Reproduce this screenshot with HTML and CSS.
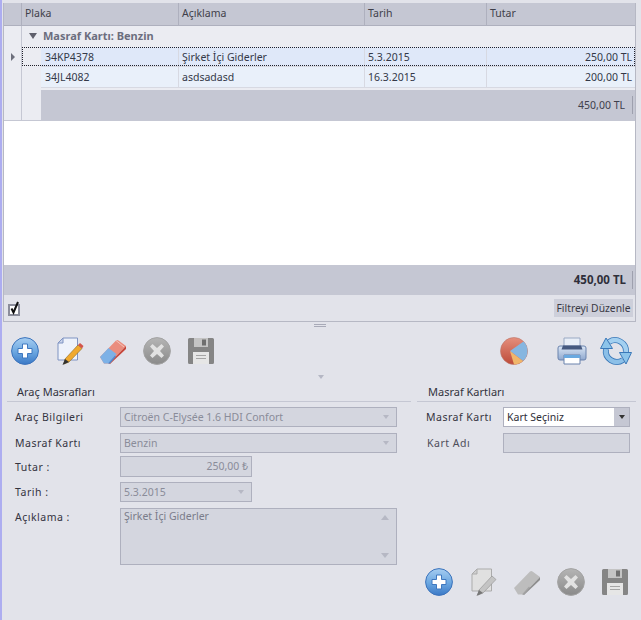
FILE: index.html
```html
<!DOCTYPE html>
<html lang="tr">
<head>
<meta charset="utf-8">
<title>Araç Masrafları</title>
<link rel="stylesheet" href="styles.css">
</head>
<body>
<svg class="defs" width="0" height="0" aria-hidden="true">
  <defs>
    <linearGradient id="gBlue" x1="0" y1="0" x2="0" y2="1"><stop offset="0" stop-color="#a6cdf1"/><stop offset=".55" stop-color="#6aa6e0"/><stop offset="1" stop-color="#3a78c6"/></linearGradient>
    <linearGradient id="gGray" x1="0" y1="0" x2="0" y2="1"><stop offset="0" stop-color="#b5b5b5"/><stop offset="1" stop-color="#8a8a8a"/></linearGradient>
    <linearGradient id="gPrint" x1="0" y1="0" x2="0" y2="1"><stop offset="0" stop-color="#dbe6f5"/><stop offset="1" stop-color="#8fa8cf"/></linearGradient>
    <linearGradient id="gPie" x1="0" y1="0" x2="0" y2="1"><stop offset="0" stop-color="#e58f7d"/><stop offset="1" stop-color="#bd4a38"/></linearGradient>
    <symbol id="plus" viewBox="0 0 28 28">
      <circle cx="14" cy="14" r="13.400" fill="url(#gBlue)" stroke="#3c73bb"/>
      <path d="M11.500 7h5v4.500H21v5h-4.500V21h-5v-4.500H7v-5h4.500z" fill="#fff" stroke="#3f78c0" stroke-width="1"/>
    </symbol>
    <symbol id="cross" viewBox="0 0 28 28">
      <circle cx="14" cy="14" r="13.400" fill="url(#gGray)" stroke="#a3a3a3"/>
      <path d="M9.500 7 14 11l4.500-4 2.500 2.500-4 4.500 4 4.500-2.500 2.500-4.500-4-4.500 4L7 18.500l4-4.500-4-4.500z" fill="#e2e2e2"/>
    </symbol>
    <symbol id="save" viewBox="0 0 28 28">
      <path d="M1 2.500A1.500 1.500 0 0 1 2.500 1h23A1.500 1.500 0 0 1 27 2.500v23a1.500 1.500 0 0 1-1.500 1.500h-23A1.500 1.500 0 0 1 1 25.500z" fill="#858585"/>
      <path d="M7 1h14v9H7z" fill="#c4c4c4"/><path d="M15 2.500h4v6h-4z" fill="#6f6f6f"/>
      <path d="M6 15h16v12H6z" fill="#e6e6e6"/><path d="M9 18.500h10M9 21.500h10" stroke="#a5a5a5"/>
    </symbol>
  </defs>
</svg>
<main class="app">
  <section class="panel">
    <div class="grid-head">
      <div class="cell-ind"></div>
      <div class="head-cell c1">Plaka</div>
      <div class="head-cell c2">Açıklama</div>
      <div class="head-cell c3">Tarih</div>
      <div class="head-cell c4">Tutar</div>
    </div>
    <div class="grid-body">
      <div class="ind-col"><span class="row-arrow"></span></div>
      <div class="rows">
        <div class="group-row"><span class="group-arrow"></span><b>Masraf Kartı: Benzin</b></div>
        <div class="indented">
          <div class="row row-focus">
            <div class="cell w1">34KP4378</div><div class="cell w2">Şirket İçi Giderler</div><div class="cell w3">5.3.2015</div><div class="cell w4">250,00 TL</div>
          </div>
          <div class="row">
            <div class="cell w1">34JL4082</div><div class="cell w2">asdsadasd</div><div class="cell w3">16.3.2015</div><div class="cell w4">200,00 TL</div>
          </div>
          <div class="group-foot"><span>450,00 TL</span></div>
        </div>
      </div>
    </div>
    <div class="grid-empty"></div>
    <div class="grid-foot"><span>450,00 TL</span></div>
    <div class="filter-bar">
      <span class="check">
        <svg width="13" height="15" viewBox="0 0 13 15"><rect x="1" y="4" width="10" height="10" fill="#fff" stroke="#8b8d9b" stroke-width="2"/><path d="M3.500 7.500l2 4L10 1" fill="none" stroke="#111" stroke-width="2"/></svg>
      </span>
      <span class="filter-btn">Filtreyi Düzenle</span>
    </div>
  </section>
  <div class="grip"></div>

  <div class="toolbar">
    <div class="tools">
      <svg class="ico"><use href="#plus"/></svg>
      <svg class="ico" viewBox="-1 0 28 28">
        <path d="M7 1h14.500v22H2V6z" fill="#eef2fb" stroke="#7f93c2"/><path d="M7 1v5H2z" fill="#c9d4ec" stroke="#7f93c2"/>
        <path d="M8 27l1-5L22 8l4 3.500L13 25z" fill="#f0a92f" stroke="#8a6a24" stroke-width=".6"/><path d="M22 8l2-2 3.500 3-1.500 2.500z" fill="#d3544a"/><path d="M6.500 28 9 22l4 3z" fill="#333"/>
      </svg>
      <svg class="ico" viewBox="0 0 28 28">
        <path d="M1 20 17 3.500a2 2 0 0 1 2.500 0L27 9 10 26.500H5z" fill="#ea8d7e"/>
        <path d="M1 20 9.500 11 17.500 17 10 26.500H5z" fill="#7db1e6"/>
        <path d="M10 26.500 27 9v3L11 27z" fill="#c6463a"/><path d="M6 26.500h5l6-7-1-1-7 8z" fill="#4f8ad0"/>
        <path d="M17 3.500 25 10" stroke="#f3c4bb" fill="none"/>
      </svg>
      <svg class="ico"><use href="#cross"/></svg>
      <svg class="ico"><use href="#save"/></svg>
    </div>
    <div class="tools tools-right">
      <svg class="ico ico-pie" viewBox="0 0 28 28">
        <circle cx="14" cy="14" r="13.500" fill="url(#gPie)" stroke="#b9766a" stroke-width=".6"/>
        <path d="M10 14 23.500 4.500A13.500 13.500 0 0 1 27.500 14 13.500 13.500 0 0 1 23 24z" fill="#86b6e0"/>
        <path d="M10 14 23 24A13.500 13.500 0 0 1 14 27.500z" fill="#f0b66a"/>
      </svg>
      <svg class="ico ico-print" viewBox="0 0 30 28">
        <path d="M7 1h16v11H7z" fill="#e9eef7" stroke="#9aa9c4"/>
        <path d="M3 9h24a2 2 0 0 1 2 2v10a2 2 0 0 1-2 2H3a2 2 0 0 1-2-2V11a2 2 0 0 1 2-2z" fill="url(#gPrint)" stroke="#6b83ad"/>
        <path d="M6 8.500h18l1.500 4h-21z" fill="#46597f"/>
        <path d="M7 18h16v9H7z" fill="#fff" stroke="#6b83ad"/><path d="M7 18h16v3H7z" fill="#6aa9e0"/>
      </svg>
      <svg class="ico ico-sync" viewBox="0 0 32 28">
        <g fill="none" stroke-linecap="butt">
          <path d="M26 15A11 11 0 0 0 9 5" stroke="#3a78b8" stroke-width="6"/>
          <path d="M6 12A11 11 0 0 0 23 23" stroke="#3a78b8" stroke-width="6"/>
          <path d="M26 15A11 11 0 0 0 9 5" stroke="#a3d0f0" stroke-width="4.400"/>
          <path d="M6 12A11 11 0 0 0 23 23" stroke="#8cc0e8" stroke-width="4.400"/>
        </g>
        <path d="M6 1 12.500 11.500H.5z" fill="#8cc4ea" stroke="#3a78b8"/>
        <path d="M26 27 19.500 15.500H31.500z" fill="#8cc4ea" stroke="#3a78b8"/>
      </svg>
    </div>
  </div>
  <div class="collapse"><span></span></div>

  <div class="forms">
    <section class="form-left">
      <h2>Araç Masrafları</h2>
      <div class="field f-first">
        <label>Araç Bilgileri</label>
        <div class="input dis wide">Citroën C-Elysée 1.6 HDI Confort<i class="caret"></i></div>
      </div>
      <div class="field f-gap6">
        <label>Masraf Kartı</label>
        <div class="input dis wide">Benzin<i class="caret"></i></div>
      </div>
      <div class="field f-gap3">
        <label>Tutar :</label>
        <div class="input dis short num">250,00 ₺</div>
      </div>
      <div class="field f-gap5">
        <label>Tarih :</label>
        <div class="input dis short">5.3.2015<i class="caret"></i></div>
      </div>
      <div class="field f-gap6 f-top">
        <label>Açıklama :</label>
        <div class="input dis wide memo">Şirket İçi Giderler<i class="tri-up"></i><i class="tri-down"></i></div>
      </div>
    </section>
    <section class="form-right">
      <h2>Masraf Kartları</h2>
      <div class="field f-first">
        <label>Masraf Kartı</label>
        <div class="input active">Kart Seçiniz<span class="drop"><i></i></span></div>
      </div>
      <div class="field f-gap6">
        <label class="soft">Kart Adı</label>
        <div class="input dis blank"></div>
      </div>
      <div class="tools tools-bottom">
        <svg class="ico"><use href="#plus"/></svg>
        <svg class="ico" viewBox="-1 0 28 28">
          <path d="M7 1h14.500v22H2V6z" fill="#e0e0e0" stroke="#ababab"/><path d="M7 1v5H2z" fill="#cfcfcf" stroke="#ababab"/>
          <path d="M8 27l1-5L22 8l4 3.500L13 25z" fill="#c4c4c4" stroke="#8f8f8f" stroke-width=".6"/><path d="M6.500 28 9 22l4 3z" fill="#777"/>
        </svg>
        <svg class="ico" viewBox="0 0 28 28">
          <path d="M1 20 17 3.500a2 2 0 0 1 2.500 0L27 9 10 26.500H5z" fill="#bdbdbd"/>
          <path d="M10 26.500 27 9v3L11 27z" fill="#8e8e8e"/><path d="M6 26.500h5l6-7-1-1-7 8z" fill="#a3a3a3"/>
        </svg>
        <svg class="ico"><use href="#cross"/></svg>
        <svg class="ico"><use href="#save"/></svg>
      </div>
    </section>
  </div>
</main>
</body>
</html>
```

FILE: styles.css
```css
* { box-sizing: border-box; }
html, body { margin: 0; height: 100%; }
body { background: #e2e3ea; font: 10.500px/14px "Noto Sans", "Open Sans", sans-serif; color: #3b3b46; overflow: hidden; }
.defs { position: absolute; }
.app { width: 641px; height: 620px; border-left: 2px solid #adadf0; padding: 3px 5px 0 1px; display: flex; flex-direction: column; }

.panel { height: 319px; background: #fff; border: 1px solid #b6b8c4; border-top: 0; display: flex; flex-direction: column; }
.grid-head { display: flex; height: 23px; background: #c5c7d3; border-bottom: 1px solid #aeb0be; flex: none; }
.cell-ind { width: 18px; border-right: 1px solid #aeb0be; }
.head-cell { padding: 3px 0 0 3px; border-right: 1px solid #aeb0be; color: #3f3f4a; }
.c1 { width: 157px; } .c2 { width: 186px; } .c3 { width: 122px; } .c4 { flex: 1; border-right: 0; }

.grid-body { display: flex; height: 95px; flex: none; border-bottom: 1px solid #c5c7d3; }
.ind-col { width: 18px; background: #ebecf2; border-right: 1px solid #c5c7d3; position: relative; }
.row-arrow { position: absolute; left: 7px; top: 27px; border-left: 4px solid #6d6f7c; border-top: 4px solid transparent; border-bottom: 4px solid transparent; }
.rows { flex: 1; min-width: 0; background: #ebecf2; }
.group-row { height: 21px; padding: 3px 0 0 21px; position: relative; color: #6c6e7e; font-size: 11px; }
.group-row b { font-weight: 700; }
.group-arrow { position: absolute; left: 7px; top: 7px; border-top: 6px solid #5f606c; border-left: 4px solid transparent; border-right: 4px solid transparent; }
.indented { margin-left: 19px; }
.row { display: flex; height: 21px; background: #e9f0fa; border-bottom: 1px solid #d7d9e2; color: #333848; }
.row-focus { height: 20px; background: #dfe8f9; position: relative; }
.row-focus::after { content: ""; position: absolute; left: -19px; right: 0; top: 0; bottom: 0; border: 1px dotted #20202a; }
.cell { padding: 3px 4px 0 3px; border-right: 1px solid #d7d9e2; white-space: nowrap; }
.w1 { width: 138px; padding-left: 4px; } .w2 { width: 186px; } .w3 { width: 122px; } .w4 { flex: 1; text-align: right; border-right: 0; padding-right: 3px; }
.group-foot { margin-top: 2px; height: 30px; background: #c5c7d3; display: flex; justify-content: flex-end; align-items: center; padding-right: 2px; color: #40404c; }
.group-foot span { padding-right: 7px; border-right: 1px solid #9ea0ae; height: 18px; line-height: 18px; }

.grid-empty { flex: 1; }
.grid-foot { height: 30px; flex: none; background: #c5c7d3; display: flex; justify-content: flex-end; align-items: center; padding-right: 2px; font-weight: 700; font-size: 11.500px; color: #2f2f3a; }
.grid-foot span { padding-right: 6px; border-right: 1px solid #9ea0ae; height: 18px; line-height: 18px; }
.filter-bar { height: 26px; flex: none; background: #e2e3ea; display: flex; justify-content: space-between; align-items: center; padding: 0 2px 0 4px; }
.check { display: block; height: 15px; }
.check svg { display: block; }
.filter-btn { width: 79px; height: 18px; background: #cdcfda; text-align: center; line-height: 18px; color: #3a3a45; white-space: nowrap; font-size: 10.300px; }

.grip { height: 6px; flex: none; background: linear-gradient(#a8aab8, #a8aab8) center 2px / 12px 1px no-repeat, linear-gradient(#a8aab8, #a8aab8) center 4px / 12px 1px no-repeat; }
.toolbar { display: flex; justify-content: space-between; padding: 9px 0 0 8px; height: 42px; flex: none; }
.tools { display: flex; gap: 16px; }
.tools-right { gap: 13px; margin-right: 4px; }
.ico { width: 28px; height: 28px; display: block; flex: none; overflow: visible; }
.ico-pie { margin-right: 16px; }
.ico-print { width: 30px; }
.ico-sync { width: 32px; }
.collapse { height: 12px; display: flex; justify-content: center; padding: 5px 0 0 2px; flex: none; }
.collapse span { width: 0; height: 0; border-top: 4px solid #b5b7c4; border-left: 3px solid transparent; border-right: 3px solid transparent; }

.forms { display: flex; flex: 1; padding-left: 4px; gap: 6px; }
.form-left { width: 404px; flex: none; }
.form-right { flex: 1; min-width: 0; }
h2 { margin: 0; height: 20px; border-bottom: 1px solid #c5c7d3; font-size: 11px; font-weight: 400; line-height: 20px; padding-left: 10px; color: #33333d; }
.form-right h2 { padding-left: 11px; }
.field { display: flex; align-items: center; padding-left: 8px; }
.f-first { margin-top: 5px; }
.f-gap6 { margin-top: 6px; }
.f-gap5 { margin-top: 5px; }
.f-gap3 { margin-top: 3px; }
.f-top { align-items: flex-start; }
.f-top label { padding-top: 2px; }
.field label { width: 105px; flex: none; letter-spacing: .5px; color: #34343f; }
.form-right .field { padding-left: 9px; }
.form-right .field label { width: 77px; }
.form-right .field .soft { color: #4e4e5a; padding-left: 1px; }
.input { height: 20px; border: 1px solid #aeb0be; padding: 2px 3px 0; position: relative; white-space: nowrap; }
.dis { background: #d4d6df; color: #8a8c99; }
.wide { width: 277px; }
.short { width: 132px; }
.num { height: 21px; text-align: right; padding-right: 3px; }
.memo { height: 57px; padding-top: 0; color: #7a7c8a; }
.blank { width: 127px; }
.caret { position: absolute; right: 7px; top: 7px; border-top: 4px solid #b6b8c4; border-left: 3px solid transparent; border-right: 3px solid transparent; }
.tri-up { position: absolute; right: 7px; top: 6px; border-bottom: 5px solid #b6b8c4; border-left: 4px solid transparent; border-right: 4px solid transparent; }
.tri-down { position: absolute; right: 7px; bottom: 6px; border-top: 5px solid #b6b8c4; border-left: 4px solid transparent; border-right: 4px solid transparent; }
.active { width: 127px; background: #fff; color: #2e2e38; }
.drop { position: absolute; top: 0; right: 0; bottom: 0; width: 15px; background: #c5c7d3; }
.drop i { position: absolute; left: 5px; top: 7px; border-top: 4px solid #333; border-left: 3px solid transparent; border-right: 3px solid transparent; }
.tools-bottom { margin-top: 115px; padding-left: 8px; gap: 16px; }
```
